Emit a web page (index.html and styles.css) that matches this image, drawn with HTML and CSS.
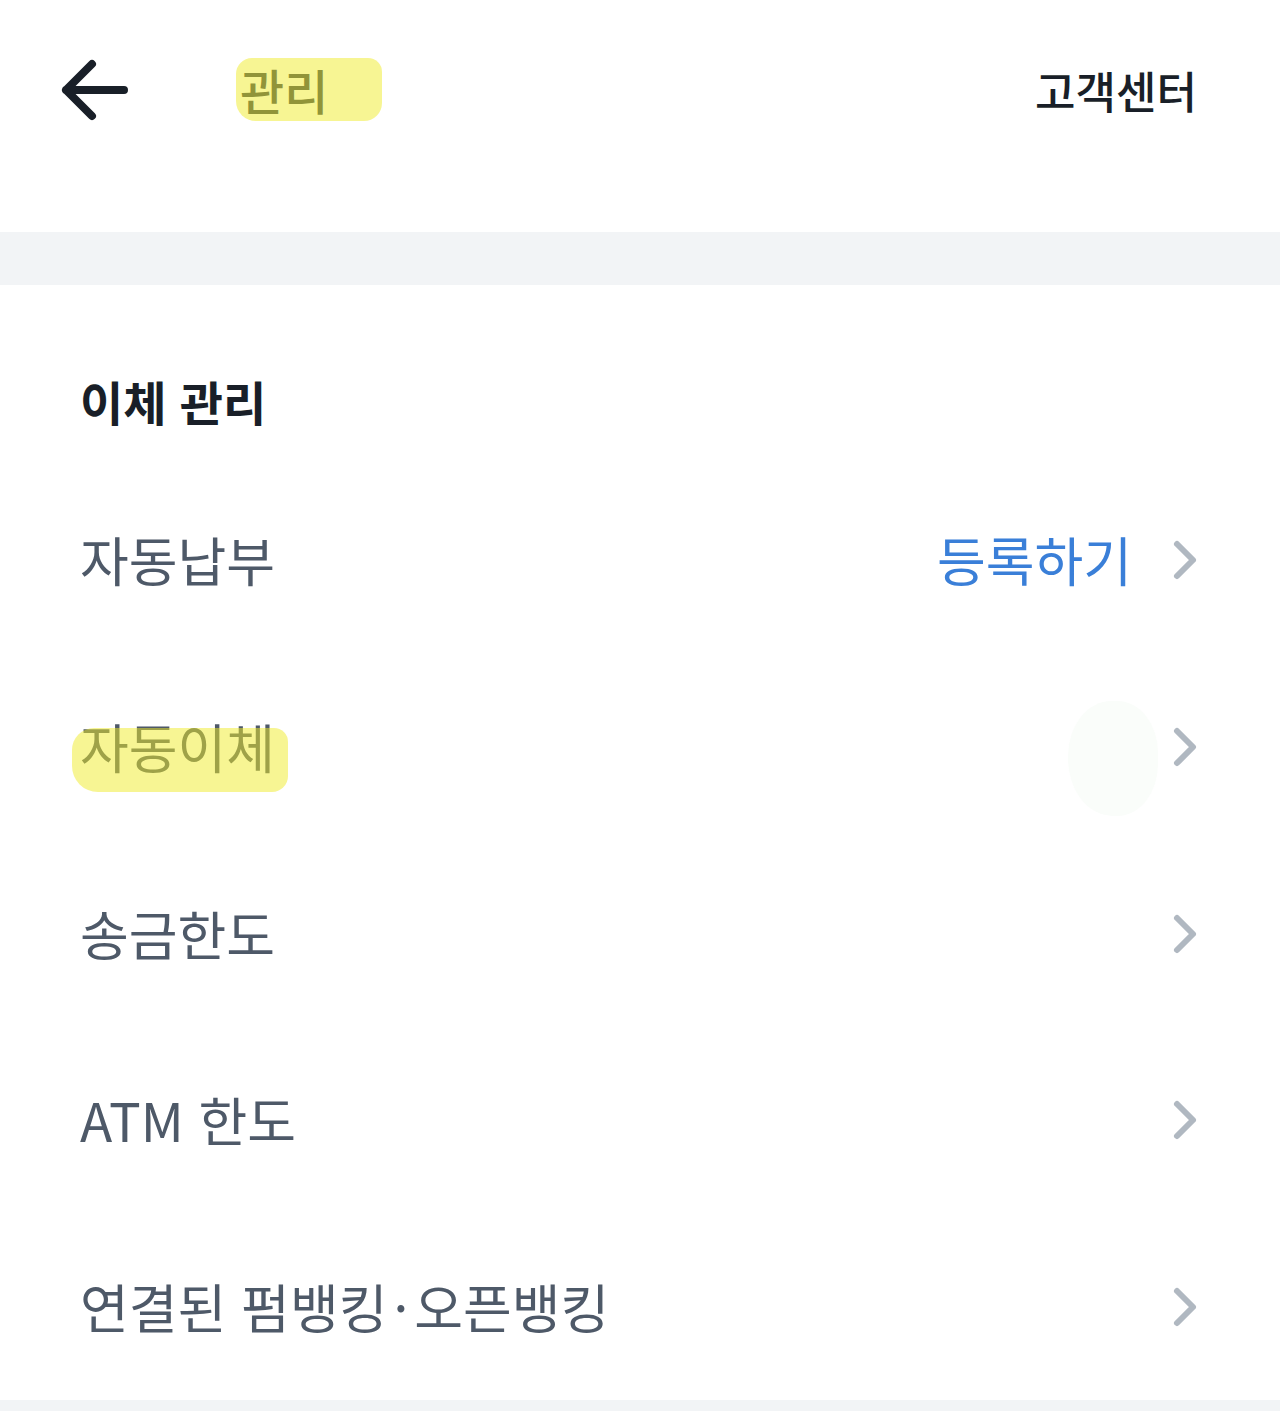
FILE: index.html
```html
<!DOCTYPE html>
<html lang="ko">
<head>
<meta charset="utf-8">
<link rel="stylesheet" href="styles.css">
</head>
<body>
<div class="page">
  <header class="topbar">
    <svg class="back" width="70" height="64" viewBox="0 0 70 64" aria-label="뒤로">
      <path d="M6 32 H64 M32 6 L6 32 L32 58" fill="none" stroke="#191f28" stroke-width="8" stroke-linecap="round" stroke-linejoin="round"/>
    </svg>
    <div class="title"><span class="mark mark-title"></span><span class="title-text">관리</span></div>
    <div class="help">고객센터</div>
  </header>
  <div class="band"></div>
  <section class="section">
    <h2 class="section-title">이체 관리</h2>
    <ul class="list">
      <li class="row">
        <span class="label">자동납부</span>
        <span class="action">등록하기</span>
        <svg class="chev" width="26" height="42" viewBox="0 0 26 42"><path d="M5 5 L21 21 L5 37" fill="none" stroke="#b0b8c1" stroke-width="6" stroke-linecap="round" stroke-linejoin="round"/></svg>
      </li>
      <li class="row">
        <span class="label hl"><span class="mark mark-row"></span>자동이체</span>
        <span class="blob"></span>
        <svg class="chev" width="26" height="42" viewBox="0 0 26 42"><path d="M5 5 L21 21 L5 37" fill="none" stroke="#b0b8c1" stroke-width="6" stroke-linecap="round" stroke-linejoin="round"/></svg>
      </li>
      <li class="row">
        <span class="label">송금한도</span>
        <svg class="chev" width="26" height="42" viewBox="0 0 26 42"><path d="M5 5 L21 21 L5 37" fill="none" stroke="#b0b8c1" stroke-width="6" stroke-linecap="round" stroke-linejoin="round"/></svg>
      </li>
      <li class="row">
        <span class="label">ATM 한도</span>
        <svg class="chev" width="26" height="42" viewBox="0 0 26 42"><path d="M5 5 L21 21 L5 37" fill="none" stroke="#b0b8c1" stroke-width="6" stroke-linecap="round" stroke-linejoin="round"/></svg>
      </li>
      <li class="row">
        <span class="label">연결된 펌뱅킹<span class="dot">·</span>오픈뱅킹</span>
        <svg class="chev" width="26" height="42" viewBox="0 0 26 42"><path d="M5 5 L21 21 L5 37" fill="none" stroke="#b0b8c1" stroke-width="6" stroke-linecap="round" stroke-linejoin="round"/></svg>
      </li>
    </ul>
  </section>
  <div class="band band-bottom"></div>
</div>
</body>
</html>
```

FILE: styles.css
```css
* { box-sizing: border-box; }
html, body { margin: 0; padding: 0; background: #ffffff; }
body {
  font-family: "Noto Sans CJK KR", "Noto Sans", "Liberation Sans", sans-serif;
  color: #191f28;
}
.page { width: 1280px; height: 1411px; overflow: hidden; }

.topbar {
  height: 232px;
  display: flex;
  align-items: flex-start;
  padding: 58px 83px 0 60px;
}
.back { flex: none; display: block; }
.title {
  position: relative;
  margin-left: 110px;
  font-size: 48px;
  line-height: 62px;
  font-weight: 500;
  color: #333d4b;
}
.title-text { position: relative; }
.help {
  margin-left: auto;
  font-size: 44px;
  line-height: 64px;
  font-weight: 500;
  color: #191f28;
}

.mark {
  position: absolute;
  background: rgba(240, 235, 40, 0.5);
  border-radius: 16px 14px 18px 20px;
  z-index: 2;
}
.mark-title { left: -4px; top: 0; width: 146px; height: 63px; }
.mark-row { left: -8px; top: 14px; width: 216px; height: 64px; border-radius: 22px 14px 16px 26px; }

.band { height: 53px; background: #f2f4f6; }
.band-bottom { height: 11px; }

.section { padding-top: 89px; }
.section-title {
  margin: 0 0 39px 80px;
  font-size: 47px;
  line-height: 54px;
  font-weight: 700;
  color: #191f28;
}
.list { list-style: none; margin: 0; padding: 0; }
.row {
  height: 186.67px;
  display: flex;
  align-items: center;
  padding: 0 82px 0 80px;
  position: relative;
}
.label {
  font-size: 53px;
  line-height: 64px;
  color: #4e5968;
  position: relative;
  top: -1px;
}
.dot { margin: 0 6px; }
.action {
  margin-left: auto;
  margin-right: 40px;
  font-size: 53px;
  line-height: 64px;
  color: #3a7fd8;
  position: relative;
  top: -1px;
}
.chev { display: block; flex: none; margin-left: auto; }
.action + .chev { margin-left: 0; }
.blob {
  position: absolute;
  left: 1068px;
  top: 47px;
  width: 90px;
  height: 115px;
  border-radius: 48% 45% 45% 50%;
  background: #fafdfa;
}
```
